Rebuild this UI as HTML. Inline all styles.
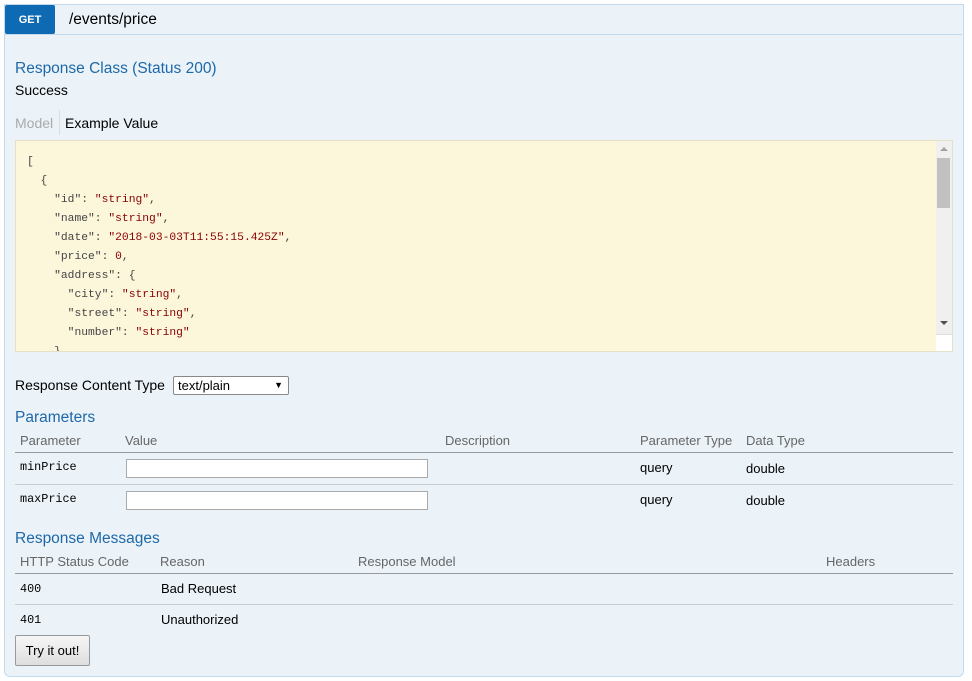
<!DOCTYPE html>
<html><head><style>
body{margin:0;width:972px;height:681px;background:#fff;font-family:"Liberation Sans",sans-serif;font-size:14px;color:#000;position:relative;overflow:hidden}
.a{position:absolute}
.panel{left:4px;top:4px;width:958px;height:671px;background:#ebf3f9;border:1px solid #c3d9ec;border-radius:0 0 6px 6px}
.hdr{left:5px;top:5px;width:957px;height:29px;border-bottom:1px solid #c3d9ec}
.get{left:5px;top:5px;width:50px;height:29px;background:#0f6ab4;color:#fff;font-size:11px;font-weight:bold;text-align:center;line-height:31px;border-radius:2px}
.blue{color:#1e68a8;font-size:15.5px}
.code{left:15px;top:140px;width:936px;height:210px;background:#fcf6db;border:1px solid #e5e0c6;overflow:hidden}
pre{margin:0;position:absolute;left:11px;top:12px;font-family:"Liberation Mono",monospace;font-size:11.3px;line-height:19px;color:#444}
.s{color:#880000}
.th{color:#666;font-size:13px}
.mono{font-family:"Liberation Mono",monospace;font-size:11.8px}
.line{height:1px;background:#999;left:15px;width:938px}
.line2{height:1px;background:#ccc;left:15px;width:938px}
input{position:absolute;width:300px;height:17px;border:1px solid #aaa;background:#fff;padding:0;margin:0}
</style></head><body>
<div class="a panel"></div>
<div class="a hdr"></div>
<div class="a get">GET</div>
<div class="a" style="left:69px;top:11px;font-size:15.5px">/events/price</div>
<div class="a blue" style="left:15px;top:60px">Response Class (Status 200)</div>
<div class="a" style="left:15px;top:82px">Success</div>
<div class="a" style="left:15px;top:115px;color:#aaa">Model</div>
<div class="a" style="left:59px;top:110px;width:1px;height:25px;background:#ddd"></div>
<div class="a" style="left:65px;top:115px">Example Value</div>
<div class="a code"><pre>[
  {
    "id": <span class="s">"string"</span>,
    "name": <span class="s">"string"</span>,
    "date": <span class="s">"2018-03-03T11:55:15.425Z"</span>,
    "price": <span class="s">0</span>,
    "address": {
      "city": <span class="s">"string"</span>,
      "street": <span class="s">"string"</span>,
      "number": <span class="s">"string"</span>
    }
  }
]</pre>
<div class="a" style="right:0;top:0;width:16px;height:210px;background:#f0f0f0"></div>
<div class="a" style="right:2px;top:17px;width:13px;height:50px;background:#c1c1c1"></div>
<div class="a" style="right:4px;top:6px;width:0;height:0;border:4px solid transparent;border-bottom-color:#a3a3a3;border-top:0"></div>
<div class="a" style="right:4px;top:180px;width:0;height:0;border:4px solid transparent;border-top-color:#505050;border-bottom:0"></div>
<div class="a" style="right:0;bottom:0;width:16px;height:16px;background:#fff;border-top:1px solid #ddd"></div>
</div>
<div class="a" style="left:15px;top:377px">Response Content Type</div>
<div class="a" style="left:173px;top:376px;width:114px;height:17px;border:1px solid #888;background:#fff;font-size:13px;line-height:17px;border-radius:2px"><span style="margin-left:4px">text/plain</span><span style="position:absolute;right:5px;font-size:9px">▼</span></div>
<div class="a blue" style="left:15px;top:409px">Parameters</div>
<div class="a th" style="left:20px;top:433px">Parameter</div>
<div class="a th" style="left:125px;top:433px">Value</div>
<div class="a th" style="left:445px;top:433px">Description</div>
<div class="a th" style="left:640px;top:433px">Parameter Type</div>
<div class="a th" style="left:746px;top:433px">Data Type</div>
<div class="a line" style="top:452px"></div>
<div class="a mono" style="left:20px;top:460px">minPrice</div>
<input style="left:126px;top:459px">
<div class="a" style="left:640px;top:460px;font-size:13px">query</div>
<div class="a" style="left:746px;top:461px;font-size:13px">double</div>
<div class="a line2" style="top:484px"></div>
<div class="a mono" style="left:20px;top:492px">maxPrice</div>
<input style="left:126px;top:491px">
<div class="a" style="left:640px;top:492px;font-size:13px">query</div>
<div class="a" style="left:746px;top:493px;font-size:13px">double</div>
<div class="a blue" style="left:15px;top:530px">Response Messages</div>
<div class="a th" style="left:20px;top:554px">HTTP Status Code</div>
<div class="a th" style="left:160px;top:554px">Reason</div>
<div class="a th" style="left:358px;top:554px">Response Model</div>
<div class="a th" style="left:826px;top:554px">Headers</div>
<div class="a line" style="top:573px"></div>
<div class="a mono" style="left:20px;top:582px">400</div>
<div class="a" style="left:161px;top:581px;font-size:13px">Bad Request</div>
<div class="a line2" style="top:604px"></div>
<div class="a mono" style="left:20px;top:613px">401</div>
<div class="a" style="left:161px;top:612px;font-size:13px">Unauthorized</div>
<div class="a" style="left:15px;top:635px;width:73px;height:29px;border:1px solid #999;border-radius:2px;background:linear-gradient(#f6f6f6,#dedede);font-size:13px;line-height:29px;text-align:center">Try it out!</div>
</body></html>
